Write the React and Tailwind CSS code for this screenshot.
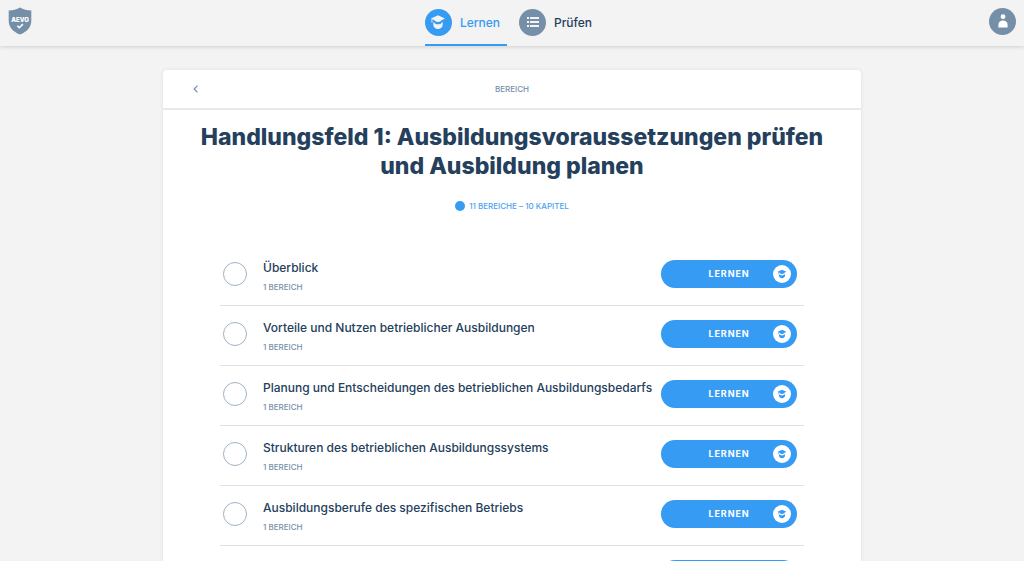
import clsx from 'clsx';

const topics = [
  { id: 1, title: 'Überblick', info: '1 Bereich' },
  { id: 2, title: 'Vorteile und Nutzen betrieblicher Ausbildungen', info: '1 Bereich' },
  { id: 3, title: 'Planung und Entscheidungen des betrieblichen Ausbildungsbedarfs', info: '1 Bereich' },
  { id: 4, title: 'Strukturen des betrieblichen Ausbildungssystems', info: '1 Bereich' },
  { id: 5, title: 'Ausbildungsberufe des spezifischen Betriebs', info: '1 Bereich' },
  { id: 6, title: 'Eignung des Betriebs', info: '1 Bereich' },
];

const GraduateIcon = ({ className }) => (
  <svg viewBox="0 0 16 16" className={className} fill="currentColor" aria-hidden="true">
    <path d="M8 1.2 15 4.500 12 6C11 7.200 9.600 7.900 8 7.900S5 7.200 4 6L1 4.500z" />
    <path d="M1.500 4.600h.9v3.900h-.9z" />
    <path d="M3.300 7.700C4.300 9.400 6 10.300 8 10.300s3.700-.9 4.700-2.600v3.200c0 2.300-2.100 4-4.700 4s-4.700-1.700-4.700-4z" />
  </svg>
);

const ListIcon = ({ className }) => (
  <svg viewBox="0 0 12 10" className={className} fill="currentColor" aria-hidden="true">
    <path d="M0 0h2v2H0zM0 4h2v2H0zM0 8h2v2H0zM3 0h9v2H3zM3 4h9v2H3zM3 8h9v2H3z" />
  </svg>
);

const PersonIcon = ({ className }) => (
  <svg viewBox="0 0 10 14" className={className} fill="currentColor" aria-hidden="true">
    <circle cx="5" cy="2.7" r="2.4" />
    <path d="M.4 13.500v-2.700C.4 8.200 2.200 6.600 5 6.600s4.600 1.600 4.600 4.200v2.700z" />
  </svg>
);

const Logo = () => (
  <a href="#" aria-label="AEVO">
    <svg viewBox="0 0 24 28" className="h-7 w-6" aria-hidden="true">
      <path
        d="M12 .5c3.200 1.900 7 2.900 11.300 3.100v10.200c0 6.400-4.300 11.100-11.300 13.700C5 24.900.7 20.200.7 13.800V3.600C5 3.400 8.800 2.400 12 .5z"
        fill="#768fa8"
      />
      <text
        x="12"
        y="15"
        textAnchor="middle"
        fill="#fff"
        className="font-['Inter',sans-serif] text-[6px] font-black"
      >
        AEVO
      </text>
      <path d="m9.300 18.700 2 2 3.600-3.600" fill="none" stroke="#fff" strokeWidth="1.500" />
    </svg>
  </a>
);

const NavItem = ({ label, active, children }) => (
  <a
    href="#"
    className={clsx(
      'flex items-center gap-2 border-b-2 pr-[7px]',
      active ? 'border-[#359bf3] text-[#359bf3]' : 'border-transparent text-[#24405c]'
    )}
  >
    <span
      className={clsx(
        'flex size-[27px] items-center justify-center rounded-full text-[#f3f3f3]',
        active ? 'bg-[#359bf3]' : 'bg-[#768fa8]'
      )}
    >
      {children}
    </span>
    <span className="pt-0.5 text-xs font-medium">{label}</span>
  </a>
);

const Header = () => (
  <header className="sticky top-0 z-10 flex h-[46px] items-stretch justify-between bg-[#f3f3f3] px-2 shadow-[0_1px_4px_rgba(0,0,0,0.15)]">
    <div className="flex flex-1 items-center pb-1">
      <Logo />
    </div>
    <nav className="flex gap-3">
      <NavItem label="Lernen" active>
        <GraduateIcon className="size-4" />
      </NavItem>
      <NavItem label="Prüfen">
        <ListIcon className="h-[10px] w-3" />
      </NavItem>
    </nav>
    <div className="flex flex-1 items-center justify-end pb-1">
      <button
        type="button"
        aria-label="Profil"
        className="flex size-[27px] items-center justify-center rounded-full bg-[#768fa8] text-white"
      >
        <PersonIcon className="h-[14px] w-[10px]" />
      </button>
    </div>
  </header>
);

const TopicRow = ({ topic }) => (
  <li className="flex h-[60px] items-center justify-between border-b border-[#dfe3e8] pr-[7px] pb-1 pl-[3px]">
    <div className="flex min-w-0 items-center gap-4">
      <span className="size-6 shrink-0 rounded-full border border-[#9fb2c4]" />
      <div className="min-w-0 pt-2">
        <h2 className="text-xs font-medium whitespace-nowrap text-[#24405c]">{topic.title}</h2>
        <p className="mt-[3px] text-[8px] leading-4 font-medium text-[#768fa8] uppercase">{topic.info}</p>
      </div>
    </div>
    <button
      type="button"
      className="flex h-7 w-[136px] shrink-0 items-center rounded-full bg-[#359bf3] pr-[6px] text-white"
    >
      <span className="flex-1 pl-6 text-[9px] font-bold tracking-widest uppercase">Lernen</span>
      <span className="flex size-[18px] items-center justify-center rounded-full bg-white text-[#359bf3]">
        <GraduateIcon className="size-[10px]" />
      </span>
    </button>
  </li>
);

export default function App() {
  return (
    <div className="min-h-screen bg-[#f3f3f3] font-['Inter','Open_Sans',sans-serif]">
      <Header />
      <main className="mx-auto mt-6 w-full max-w-[698px] rounded-t bg-white shadow-[0_0_4px_rgba(0,0,0,0.08)]">
        <div className="grid h-10 grid-cols-3 items-center border-b-2 border-[#e8e9eb] px-[29px]">
          <button type="button" aria-label="Zurück" className="w-4 text-[#768fa8]">
            <svg viewBox="0 0 8 8" className="size-2" fill="none" stroke="currentColor" strokeWidth="1.2" aria-hidden="true">
              <path d="M5.500.7 2.200 4l3.300 3.300" />
            </svg>
          </button>
          <p className="text-center text-[8px] font-medium text-[#768fa8] uppercase">Bereich</p>
        </div>
        <div className="px-7 pt-[13px] text-center">
          <h1 className="text-[23px] leading-[29px] font-extrabold text-[#24405c]">
            Handlungsfeld 1: Ausbildungsvoraussetzungen prüfen und Ausbildung planen
          </h1>
          <p className="mt-[17px] flex items-center justify-center gap-1 text-[8px] leading-4 font-medium text-[#4b9ff5] uppercase">
            <span className="size-[10px] rounded-full bg-[#359bf3]" />
            11 Bereiche – 10 Kapitel
          </p>
        </div>
        <ul className="mt-8 px-[57px] pb-8">
          {topics.map((topic) => (
            <TopicRow key={topic.id} topic={topic} />
          ))}
        </ul>
      </main>
    </div>
  );
}
